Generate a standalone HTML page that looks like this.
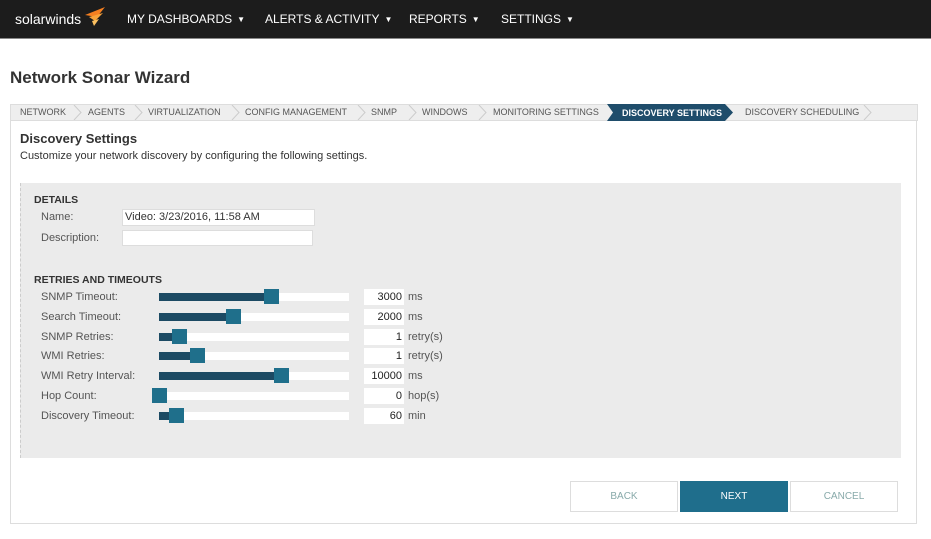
<!DOCTYPE html><html><head><style>
body{margin:0;width:931px;height:539px;background:#fff;font-family:"Liberation Sans",sans-serif;position:relative;overflow:hidden;color:#333}
.top{position:absolute;left:0;top:0;width:931px;height:38px;background:#1c1c1c;border-bottom:1px solid #888}
.top span{position:absolute;top:12px;color:#fff;font-size:12px}
.top span i{font-style:normal;font-size:8px;margin-left:5px;vertical-align:1px}
.a{position:absolute}
h1{position:absolute;left:10px;top:68px;margin:0;font-size:17px;font-weight:bold;color:#333}
.bc{position:absolute;left:10px;top:104px;width:906px;height:15px;background:#eee;border:1px solid #ddd;font-size:9px;color:#555}
.bc span{position:absolute;top:2px}
.bc svg.c{position:absolute;top:0}
.panel{position:absolute;left:10px;top:120px;width:905px;height:403px;border:1px solid #ddd;border-top:none}
.gray{position:absolute;left:20px;top:183px;width:880px;height:275px;background:#ebebeb;border-left:1px dashed #ccc}
.lbl{position:absolute;left:41px;font-size:11px;color:#555}
.trk{position:absolute;left:159px;width:190px;height:8px;background:#fff}
.fill{position:absolute;left:0;top:0;height:8px;background:#1c4a63}
.h{position:absolute;top:-4px;width:15px;height:15px;background:#1f6f8b}
.inp{position:absolute;left:364px;width:38px;height:16px;background:#fff;font-size:11px;text-align:right;line-height:16px;color:#222;padding-right:2px}
.u{position:absolute;left:408px;font-size:11px;color:#555}
.btn{position:absolute;top:481px;width:106px;height:29px;border:1px solid #ddd;background:#fff;font-size:10px;color:#8aa;text-align:center;line-height:29px}
</style></head><body>
<div class="top">
<span style="left:15px;top:11px;font-size:14px">solarwinds</span>
<svg class="a" style="left:83px;top:7px" width="24" height="20" viewBox="0 0 24 20"><path d="M2 8 L22 0 L14 10 Z" fill="#f57f20"/><path d="M6 10 L20 6 L12 14 Z" fill="#f9a33a"/><path d="M9 14 L16 12 L11 19Z" fill="#fbc060"/></svg>
<span style="left:127px">MY DASHBOARDS<i>▼</i></span>
<span style="left:265px">ALERTS &amp; ACTIVITY<i>▼</i></span>
<span style="left:409px">REPORTS<i>▼</i></span>
<span style="left:501px">SETTINGS<i>▼</i></span>
</div>
<h1>Network Sonar Wizard</h1>
<div class="bc">
<span style="left:9px">NETWORK</span><span style="left:77px">AGENTS</span><span style="left:137px">VIRTUALIZATION</span><span style="left:234px">CONFIG MANAGEMENT</span><span style="left:360px">SNMP</span><span style="left:411px">WINDOWS</span><span style="left:482px">MONITORING SETTINGS</span>
<svg class="c" style="left:62px" width="10" height="15"><path d="M1 0L8 7.5L1 15" fill="none" stroke="#ccc"/></svg>
<svg class="c" style="left:123px" width="10" height="15"><path d="M1 0L8 7.5L1 15" fill="none" stroke="#ccc"/></svg>
<svg class="c" style="left:220px" width="10" height="15"><path d="M1 0L8 7.5L1 15" fill="none" stroke="#ccc"/></svg>
<svg class="c" style="left:346px" width="10" height="15"><path d="M1 0L8 7.5L1 15" fill="none" stroke="#ccc"/></svg>
<svg class="c" style="left:397px" width="10" height="15"><path d="M1 0L8 7.5L1 15" fill="none" stroke="#ccc"/></svg>
<svg class="c" style="left:467px" width="10" height="15"><path d="M1 0L8 7.5L1 15" fill="none" stroke="#ccc"/></svg>
<svg class="c" style="left:852px" width="10" height="15"><path d="M1 0L8 7.5L1 15" fill="none" stroke="#ccc"/></svg>
<svg class="a" style="left:596px;top:-1px" width="130" height="17"><path d="M0 0H118L126 8.5L118 17H0L6 8.5Z" fill="#1f4d6b"/><text x="15" y="12" font-size="9" font-weight="bold" fill="#fff" font-family="Liberation Sans">DISCOVERY SETTINGS</text></svg>
<span style="left:734px">DISCOVERY SCHEDULING</span>
</div>
<div class="panel"></div>
<div class="a" style="left:20px;top:131px;font-size:13px;font-weight:bold">Discovery Settings</div>
<div class="a" style="left:20px;top:150px;font-size:11px">Customize your network discovery by configuring the following settings.</div>
<div class="gray"></div>
<div class="a" style="left:34px;top:194px;font-size:10.5px;font-weight:bold">DETAILS</div>
<div class="lbl" style="top:211px">Name:</div>
<div class="a" style="left:122px;top:209px;width:189px;height:15px;background:#fff;border:1px solid #ddd;font-size:11px;line-height:15px;padding-left:2px;box-sizing:content-box">Video: 3/23/2016, 11:58 AM</div>
<div class="lbl" style="top:232px">Description:</div>
<div class="a" style="left:122px;top:230px;width:189px;height:14px;background:#fff;border:1px solid #ddd"></div>
<div class="a" style="left:34px;top:274px;font-size:10.5px;font-weight:bold">RETRIES AND TIMEOUTS</div>

<div class="lbl" style="top:291px">SNMP Timeout:</div><div class="trk" style="top:293px"><div class="fill" style="width:110px"></div><div class="h" style="left:105px"></div></div><div class="inp" style="top:289px">3000</div><div class="u" style="top:291px">ms</div>
<div class="lbl" style="top:311px">Search Timeout:</div><div class="trk" style="top:313px"><div class="fill" style="width:72px"></div><div class="h" style="left:67px"></div></div><div class="inp" style="top:309px">2000</div><div class="u" style="top:311px">ms</div>
<div class="lbl" style="top:331px">SNMP Retries:</div><div class="trk" style="top:333px"><div class="fill" style="width:18px"></div><div class="h" style="left:13px"></div></div><div class="inp" style="top:329px">1</div><div class="u" style="top:331px">retry(s)</div>
<div class="lbl" style="top:350px">WMI Retries:</div><div class="trk" style="top:352px"><div class="fill" style="width:36px"></div><div class="h" style="left:31px"></div></div><div class="inp" style="top:348px">1</div><div class="u" style="top:350px">retry(s)</div>
<div class="lbl" style="top:370px">WMI Retry Interval:</div><div class="trk" style="top:372px"><div class="fill" style="width:120px"></div><div class="h" style="left:115px"></div></div><div class="inp" style="top:368px">10000</div><div class="u" style="top:370px">ms</div>
<div class="lbl" style="top:390px">Hop Count:</div><div class="trk" style="top:392px"><div class="h" style="left:-7px"></div></div><div class="inp" style="top:388px">0</div><div class="u" style="top:390px">hop(s)</div>
<div class="lbl" style="top:410px">Discovery Timeout:</div><div class="trk" style="top:412px"><div class="fill" style="width:15px"></div><div class="h" style="left:10px"></div></div><div class="inp" style="top:408px">60</div><div class="u" style="top:410px">min</div>

<div class="btn" style="left:570px">BACK</div>
<div class="btn" style="left:680px;background:#1f6e8c;border-color:#1f6e8c;color:#fff">NEXT</div>
<div class="btn" style="left:790px">CANCEL</div>
</body></html>
